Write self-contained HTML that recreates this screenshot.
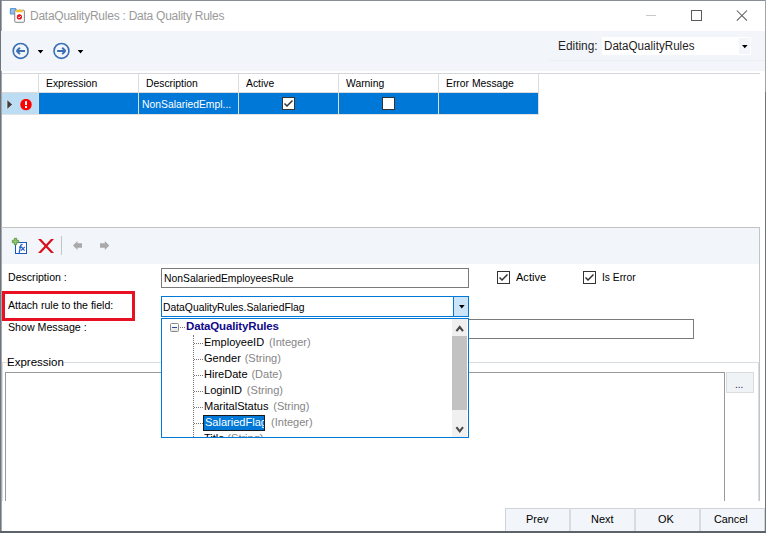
<!DOCTYPE html>
<html><head><meta charset="utf-8">
<style>
*{margin:0;padding:0;box-sizing:border-box}
html,body{width:766px;height:533px;overflow:hidden;background:#fff}
body{position:relative;font-family:"Liberation Sans",sans-serif;font-size:11px;color:#000}
.a{position:absolute}
.t{position:absolute;white-space:pre;line-height:1}
.s9{font-size:11.5px;transform:scaleX(.9);transform-origin:0 0}
.cb{position:absolute;width:13px;height:13px;border:1px solid #333;background:#fff}
</style></head><body>

<!-- window borders -->
<div class="a" style="left:0;top:0;width:766px;height:1px;background:#8a8f96"></div>
<div class="a" style="left:0;top:0;width:1px;height:533px;background:#6f757c"></div>
<div class="a" style="left:1px;top:1px;width:1px;height:531px;background:#a4a8ad"></div>
<div class="a" style="left:765px;top:0;width:1px;height:92px;background:#a2a4a8"></div>
<div class="a" style="left:765px;top:92px;width:1px;height:441px;background:#6f757c"></div>
<div class="a" style="left:0;top:531px;width:766px;height:2px;background:#5d636a"></div>

<!-- title bar -->
<svg class="a" style="left:8px;top:6px" width="18" height="18" viewBox="0 0 18 18">
  <rect x="1.8" y="1.9" width="6.6" height="6.6" rx="1.2" fill="#5b9bd5"/>
  <path d="M4 3V7.5M6 3V7.5" stroke="#dbe9f6" stroke-width="0.9"/>
  <rect x="6.75" y="4.25" width="9.6" height="12" rx="0.8" fill="#fff" stroke="#808080"/>
  <path d="M8.2 4H10.6L11.5 3L12.4 4H14.8V6.3H8.2Z" fill="#f5c02a"/>
  <circle cx="11.4" cy="10.9" r="2.6" fill="#e0141c"/>
  <path d="M10.2 10.8L11.2 11.9L12.8 10" fill="none" stroke="#fff" stroke-width="0.9"/>
</svg>
<div class="t" style="left:30px;top:10px;font-size:12px;letter-spacing:-0.25px;color:#9a9a9a">DataQualityRules : Data Quality Rules</div>
<div class="a" style="left:646px;top:15px;width:10px;height:1px;background:#c8c8c8"></div>
<div class="a" style="left:691px;top:10px;width:10.5px;height:10.5px;border:1px solid #5a5a5a"></div>
<svg class="a" style="left:736px;top:10px" width="12" height="12" viewBox="0 0 12 12"><path d="M0.8 0.5L11 10.7M11 0.5L0.8 10.7" stroke="#5a5a5a" stroke-width="1.05"/></svg>

<!-- top toolbar -->
<div class="a" style="left:1px;top:31px;width:764px;height:40px;background:#f2f5f9"></div>
<div class="a" style="left:549px;top:60px;width:215px;height:1px;background:#eceff2"></div>
<svg class="a" style="left:0;top:31px" width="100" height="40" viewBox="0 31 100 40">
  <circle cx="20.65" cy="50.9" r="7.45" fill="none" stroke="#3a6fb4" stroke-width="1.6"/>
  <path d="M16.6 50.9H25M16.6 50.9L19.9 47.7M16.6 50.9L19.9 54.1" fill="none" stroke="#3a6fb4" stroke-width="2"/>
  <circle cx="61.45" cy="50.9" r="7.45" fill="none" stroke="#3a6fb4" stroke-width="1.6"/>
  <path d="M57.1 50.9H65.5M65.5 50.9L62.2 47.7M65.5 50.9L62.2 54.1" fill="none" stroke="#3a6fb4" stroke-width="2"/>
  <path d="M37.7 50H43.3L40.5 53.4Z" fill="#000"/>
  <path d="M77.7 50H83.3L80.5 53.4Z" fill="#000"/>
</svg>
<div class="t" style="left:558px;top:39.5px;font-size:12.5px;transform:scaleX(0.95);transform-origin:0 0;color:#1e1e1e">Editing:</div>
<div class="a" style="left:602px;top:37px;width:149px;height:18px;background:#fff"></div>
<div class="t" style="left:604px;top:39.5px;font-size:12.5px;transform:scaleX(0.93);transform-origin:0 0;color:#1e1e1e">DataQualityRules</div>
<div class="a" style="left:739px;top:38px;width:11px;height:16px;background:#f2f5f9"></div>
<svg class="a" style="left:741.7px;top:44.8px" width="6" height="4"><path d="M0 0H5.6L2.8 3.3Z" fill="#000"/></svg>

<!-- grid -->
<div class="a" style="left:2px;top:73px;width:758px;height:1px;background:#d4d8dc"></div>
<!-- grid header -->
<div class="a" style="left:38px;top:74px;width:1px;height:41px;background:#dcdcdc"></div>
<div class="a" style="left:138px;top:74px;width:1px;height:41px;background:#dcdcdc"></div>
<div class="a" style="left:238px;top:74px;width:1px;height:41px;background:#dcdcdc"></div>
<div class="a" style="left:338px;top:74px;width:1px;height:41px;background:#dcdcdc"></div>
<div class="a" style="left:438px;top:74px;width:1px;height:41px;background:#dcdcdc"></div>
<div class="a" style="left:538px;top:74px;width:1px;height:41px;background:#dcdcdc"></div>
<div class="a" style="left:2px;top:92px;width:537px;height:1px;background:#dcdcdc"></div>
<div class="a" style="left:2px;top:114px;width:537px;height:1px;background:#e2e2e2"></div>
<div class="t s9" style="left:46px;top:77.5px">Expression</div>
<div class="t s9" style="left:146px;top:77.5px">Description</div>
<div class="t s9" style="left:246px;top:77.5px">Active</div>
<div class="t s9" style="left:345.5px;top:77.5px">Warning</div>
<div class="t s9" style="left:445.5px;top:77.5px">Error Message</div>
<!-- row -->
<div class="a" style="left:2px;top:93px;width:36px;height:21px;background:#bcdcf4"></div>
<div class="a" style="left:39px;top:93px;width:99px;height:21px;background:#0078d7"></div>
<div class="a" style="left:139px;top:93px;width:99px;height:21px;background:#0078d7"></div>
<div class="a" style="left:239px;top:93px;width:99px;height:21px;background:#0078d7"></div>
<div class="a" style="left:339px;top:93px;width:99px;height:21px;background:#0078d7"></div>
<div class="a" style="left:439px;top:93px;width:99px;height:21px;background:#0078d7"></div>
<svg class="a" style="left:6px;top:99px" width="8" height="12"><path d="M1 0.5L6.5 5.5L1 10.5Z" fill="#3c3c3c" stroke="#fff" stroke-width="0.6"/></svg>
<svg class="a" style="left:20px;top:99px" width="12" height="12" viewBox="0 0 12 12"><circle cx="6" cy="5.6" r="5.7" fill="#f00"/><rect x="5" y="2.2" width="2" height="3.8" fill="#fff"/><rect x="5" y="7" width="2" height="2" fill="#fff"/></svg>
<div class="t s9" style="left:142px;top:98.5px;color:#fff">NonSalariedEmpl...</div>
<div class="cb" style="left:282px;top:97px;border-color:#333"></div>
<svg class="a" style="left:284px;top:100px" width="9" height="8"><path d="M0.5 3.5L3 6L8.5 0.5" fill="none" stroke="#333" stroke-width="1.45"/></svg>
<div class="cb" style="left:382px;top:97px;border-color:#333"></div>

<!-- lower panel -->
<div class="a" style="left:1px;top:227px;width:759px;height:1px;background:#c2c2c2"></div>
<div class="a" style="left:759px;top:227px;width:1px;height:274px;background:#c4c4c4"></div>
<div class="a" style="left:2px;top:362px;width:1px;height:139px;background:#d8dde3"></div>
<div class="a" style="left:2px;top:228px;width:757px;height:36px;background:#f2f5f9"></div>
<!-- toolbar2 icons -->
<svg class="a" style="left:0;top:228px" width="120" height="36" viewBox="0 228 120 36">
  <rect x="15.5" y="242.5" width="11" height="11" fill="#fff" stroke="#1858c0" stroke-width="1"/>
  <path d="M22.6 244.6C21.2 244.1 20.6 245.3 20.4 246.5L19.2 252.8" fill="none" stroke="#2360c8" stroke-width="1.3"/><path d="M19 247.2H22.3" stroke="#2360c8" stroke-width="1.1"/><path d="M21.2 246.8L24.6 250.6M24.8 246.8L21 250.6" stroke="#2360c8" stroke-width="1.2"/>
  <path d="M14.3 238.3H16.7V240.3H18.7V242.7H16.7V244.7H14.3V242.7H12.3V240.3H14.3Z" fill="#8cc56e" stroke="#58913c" stroke-width="0.8"/>
  <path d="M38 239H41L54 253H51Z M51 239H54L41 253H38Z" fill="#d8101a"/>
  <rect x="61" y="236" width="1" height="19" fill="#c4c4c4"/>
  <path d="M73 245.4L77.5 241V243.2H82V247.8H77.5V250Z" fill="#a9a9a9"/>
  <path d="M109.3 245.4L104.8 241V243.2H100V247.8H104.8V250Z" fill="#a9a9a9"/>
</svg>

<!-- form -->
<div class="t" style="left:8px;top:271.5px;font-size:11.5px;transform:scaleX(0.92);transform-origin:0 0">Description :</div>
<div class="a" style="left:2px;top:291px;width:133px;height:30px;border:3px solid #e81123"></div>
<div class="t" style="left:8px;top:299.5px;font-size:11.5px;transform:scaleX(0.92);transform-origin:0 0">Attach rule to the field:</div>
<div class="t" style="left:8px;top:322px;font-size:11.5px;transform:scaleX(0.925);transform-origin:0 0">Show Message :</div>

<div class="a" style="left:161px;top:268px;width:308px;height:20px;border:1px solid #7a7a7a;background:#fff"></div>
<div class="t s9" style="left:164px;top:272.5px">NonSalariedEmployeesRule</div>

<div class="cb" style="left:497px;top:271px"></div>
<svg class="a" style="left:499px;top:274px" width="9" height="8"><path d="M0.5 3.5L3 6L8.5 0.5" fill="none" stroke="#333" stroke-width="1.45"/></svg>
<div class="t" style="left:515.5px;top:271.5px;font-size:11.5px;transform:scaleX(0.96);transform-origin:0 0">Active</div>
<div class="cb" style="left:583px;top:271px"></div>
<svg class="a" style="left:585px;top:274px" width="9" height="8"><path d="M0.5 3.5L3 6L8.5 0.5" fill="none" stroke="#333" stroke-width="1.45"/></svg>
<div class="t" style="left:601.5px;top:271.5px;font-size:11.5px;transform:scaleX(0.89);transform-origin:0 0">Is Error</div>

<div class="a" style="left:161px;top:319px;width:533px;height:20px;border:1px solid #7a7a7a;background:#fff"></div>

<div class="a" style="left:161px;top:296px;width:308px;height:21px;border:1px solid #0078d7;background:#fff"></div>
<div class="a" style="left:453px;top:297px;width:15px;height:19px;border-left:1px solid #0078d7;background:#cce4f7"></div>
<svg class="a" style="left:458.8px;top:304.8px" width="6" height="4"><path d="M0 0H5.6L2.8 3.4Z" fill="#000"/></svg>
<div class="t s9" style="left:163px;top:301.5px">DataQualityRules.SalariedFlag</div>

<!-- expression group -->
<div class="a" style="left:2px;top:362px;width:5px;height:1px;background:#d8dde3"></div>
<div class="a" style="left:64px;top:362px;width:695px;height:1px;background:#d8dde3"></div>
<div class="a" style="left:758px;top:362px;width:1px;height:139px;background:#d8dde3"></div>
<div class="t" style="left:7px;top:357px;font-size:11.5px">Expression</div>
<div class="a" style="left:5px;top:372px;width:720px;height:129px;border:1px solid #999;border-bottom:none;background:#fff"></div>
<div class="a" style="left:726px;top:372px;width:28px;height:21px;border:1px solid #dadde0;background:#f0f3f6"></div>
<div class="t" style="left:735px;top:380px;font-size:10px;color:#301060">...</div>

<!-- bottom buttons -->
<div class="a" style="left:505px;top:508px;width:260px;height:23px;background:#f2f5f9;border:1px solid #d0d4d8;border-bottom:none"></div>
<div class="a" style="left:569px;top:508px;width:2px;height:23px;background:#d8dce0"></div>
<div class="a" style="left:634px;top:508px;width:2px;height:23px;background:#d8dce0"></div>
<div class="a" style="left:699px;top:508px;width:2px;height:23px;background:#d8dce0"></div>
<div class="t" style="left:525.5px;top:513.5px;font-size:11.5px;transform:scaleX(0.95);transform-origin:0 0">Prev</div>
<div class="t" style="left:591px;top:513.5px;font-size:11.5px;transform:scaleX(0.95);transform-origin:0 0">Next</div>
<div class="t" style="left:657.5px;top:513.5px;font-size:11.5px;transform:scaleX(0.95);transform-origin:0 0">OK</div>
<div class="t" style="left:714px;top:513.5px;font-size:11.5px;transform:scaleX(0.94);transform-origin:0 0">Cancel</div>

<!-- dropdown tree -->
<div class="a" style="left:161px;top:318px;width:308px;height:120px;border:1px solid #0078d7;background:#fff;overflow:hidden">
  <div class="a" style="left:290px;top:0;width:15px;height:118px;background:#f0f0f0"></div>
  <div class="a" style="left:290px;top:17px;width:15px;height:74px;background:#c2c2c2"></div>
  <svg class="a" style="left:293px;top:6px" width="10" height="8"><path d="M1.4 6.2L4.7 2L8 6.2" fill="none" stroke="#484848" stroke-width="2.1"/></svg>
  <svg class="a" style="left:293px;top:107px" width="10" height="8"><path d="M1.4 1.2L4.7 5.4L8 1.2" fill="none" stroke="#484848" stroke-width="2.1"/></svg>
  <div class="a" style="left:8px;top:4px;width:9px;height:9px;border:1px solid #8a8a8a;border-radius:1.5px;background:linear-gradient(#fff,#e4e4e4)"></div>
  <div class="a" style="left:10px;top:8px;width:5px;height:1px;background:#2a4a9a"></div>
  <div class="a" style="left:18px;top:8px;width:5px;height:0;border-top:1px dotted #777"></div>
  <div class="t" style="left:24px;top:2px;font-size:11.5px;font-weight:bold;color:#120a88;letter-spacing:-0.15px">DataQualityRules</div>
  <div class="a" style="left:31px;top:16px;width:0;height:110px;border-left:1px dotted #777"></div>
  <div class="a" style="left:32px;top:24px;width:9px;border-top:1px dotted #777"></div>
  <div class="a" style="left:32px;top:40px;width:9px;border-top:1px dotted #777"></div>
  <div class="a" style="left:32px;top:56px;width:9px;border-top:1px dotted #777"></div>
  <div class="a" style="left:32px;top:72px;width:9px;border-top:1px dotted #777"></div>
  <div class="a" style="left:32px;top:88px;width:9px;border-top:1px dotted #777"></div>
  <div class="a" style="left:32px;top:104px;width:9px;border-top:1px dotted #777"></div>
  <div class="a" style="left:32px;top:120px;width:9px;border-top:1px dotted #777"></div>
  <div class="t" style="left:42px;top:17.5px;font-size:11.5px;transform:scaleX(.96);transform-origin:0 0">EmployeeID<span style="color:#868686;margin-left:5px">(Integer)</span></div>
  <div class="t" style="left:42px;top:33.5px;font-size:11.5px;transform:scaleX(.96);transform-origin:0 0">Gender<span style="color:#868686;margin-left:4px">(String)</span></div>
  <div class="t" style="left:42px;top:49.5px;font-size:11.5px;transform:scaleX(.96);transform-origin:0 0">HireDate<span style="color:#868686;margin-left:4px">(Date)</span></div>
  <div class="t" style="left:42px;top:65.5px;font-size:11.5px;transform:scaleX(.96);transform-origin:0 0">LoginID<span style="color:#868686;margin-left:5px">(String)</span></div>
  <div class="t" style="left:42px;top:81.5px;font-size:11.5px;transform:scaleX(.96);transform-origin:0 0">MaritalStatus<span style="color:#868686;margin-left:5px">(String)</span></div>
  <div class="a" style="left:41px;top:96px;width:62px;height:16px;background:#0078d7;border:1px solid #1a1a1a"></div>
  <div class="a" style="left:42px;top:97px;width:60px;height:14px;overflow:hidden"><div class="t" style="left:1px;top:0.5px;font-size:11.5px;transform:scaleX(.96);transform-origin:0 0;color:#fff">SalariedFlag</div></div>
  <div class="t" style="left:109px;top:97.5px;font-size:11.5px;transform:scaleX(.96);transform-origin:0 0;color:#868686">(Integer)</div>
  <div class="t" style="left:42px;top:113.5px;font-size:11.5px;transform:scaleX(.96);transform-origin:0 0">Title<span style="color:#868686;margin-left:3px">(String)</span></div></div>
</div>
</body></html>
